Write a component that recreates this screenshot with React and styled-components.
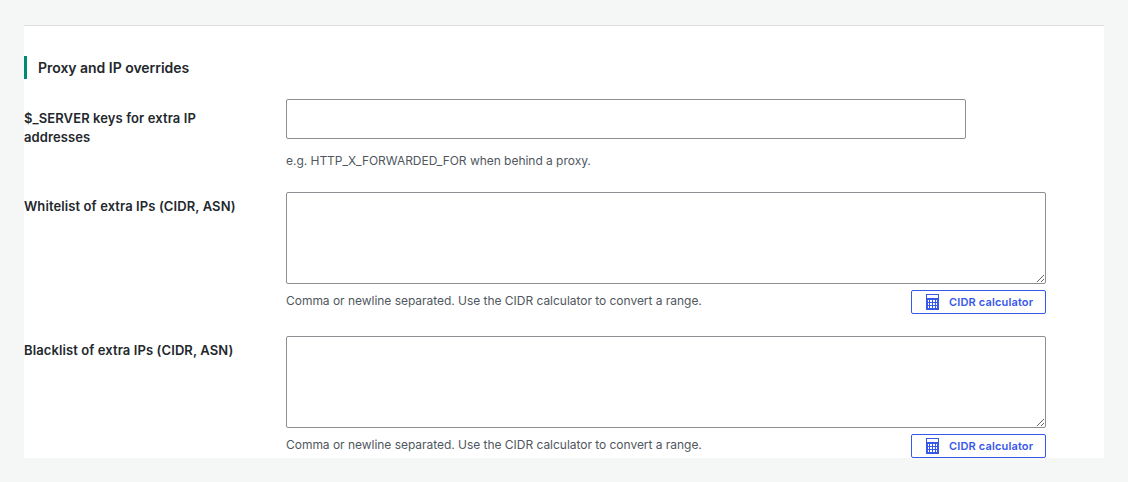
import React from 'react'
import styled, { createGlobalStyle } from 'styled-components'

const GlobalStyle = createGlobalStyle`
    html, body {
        margin: 0;
        padding: 0;
        height: 482px;
        overflow: hidden;
        background: #f5f7f6;
        font-family: Inter, "Noto Sans", sans-serif;
        -webkit-font-smoothing: antialiased;
    }
`

const Page = styled.div`
    padding: 25px 24px 0;
`

const Panel = styled.section`
    height: 433px;
    box-sizing: border-box;
    overflow: hidden;
    background: #fff;
    border-top: 1px solid #dce0df;
`

const SectionTitle = styled.h2`
    display: flex;
    align-items: center;
    height: 23px;
    margin: 30px 0 20px;
    padding-left: 11px;
    border-left: 3px solid #008a74;
    font-size: 14px;
    font-weight: 600;
    letter-spacing: -0.03px;
    color: #23282d;
`

const Row = styled.div`
    display: grid;
    grid-template-columns: 262px 760px;
    margin-bottom: ${(p) => p.$gap}px;
`

const Label = styled.label`
    padding-top: ${(p) => p.$top}px;
    width: 225px;
    font-size: 13px;
    font-weight: 600;
    letter-spacing: 0.1px;
    line-height: 18.5px;
    color: #23282d;
`

const TextInput = styled.input`
    display: block;
    box-sizing: border-box;
    width: 680px;
    height: 40px;
    padding: 0 8px;
    background: #fff;
    border: 1px solid #8c8f94;
    border-radius: 2px;
`

const TextArea = styled.textarea`
    display: block;
    box-sizing: border-box;
    width: 760px;
    height: 92px;
    padding: 8px;
    background: #fff;
    border: 1px solid #8c8f94;
    border-radius: 2px;
`

const Hint = styled.p`
    margin: ${(p) => p.$top}px 0 0;
    font-size: 12px;
    letter-spacing: -0.03px;
    line-height: 16px;
    color: #50575e;
`

const HelpRow = styled.div`
    display: flex;
    justify-content: space-between;
    align-items: flex-start;
    margin-top: 6px;
`

const CalcButton = styled.button`
    display: flex;
    align-items: center;
    box-sizing: border-box;
    width: 135px;
    height: 24px;
    padding: 0 0 0 14px;
    gap: 10px;
    background: #fff;
    border: 1px solid #3858e9;
    border-radius: 2px;
    font-family: inherit;
    font-size: 11px;
    font-weight: 600;
    letter-spacing: 0.15px;
    color: #3858e9;
`

function CalculatorIcon() {
    return (
        <svg width="13" height="16" viewBox="0 0 13 16" fill="none" stroke="currentColor" strokeWidth="1">
            <rect x="0.5" y="0.5" width="12" height="15" />
            <path d="M0.5 4.5H12.5" />
            <path fill="currentColor" stroke="none" d="M1 5h11v10H1zM4 6v2h2V6zM7 6v2h2V6zM4 9v2h2V9zM7 9v2h2V9zM4 12v2h2v-2zM7 12v2h2v-2zM2 6v2h1V6zM2 9v2h1V9zM2 12v2h1v-2zM10 6v2h1V6zM10 9v2h1V9zM10 12v2h1v-2z" fillRule="evenodd" />
        </svg>
    )
}

function CidrField({ label, gap }) {
    return (
        <Row $gap={gap}>
            <Label $top={5}>{label}</Label>
            <div>
                <TextArea />
                <HelpRow>
                    <Hint $top={3}>Comma or newline separated. Use the CIDR calculator to convert a range.</Hint>
                    <CalcButton type="button">
                        <CalculatorIcon />
                        CIDR calculator
                    </CalcButton>
                </HelpRow>
            </div>
        </Row>
    )
}

export default function App() {
    return (
        <>
            <GlobalStyle />
            <Page>
                <Panel>
                    <SectionTitle>Proxy and IP overrides</SectionTitle>
                    <Row $gap={23}>
                        <Label $top={10}>$_SERVER keys for extra IP addresses</Label>
                        <div>
                            <TextInput />
                            <Hint $top={14}>e.g. HTTP_X_FORWARDED_FOR when behind a proxy.</Hint>
                        </div>
                    </Row>
                    <CidrField label="Whitelist of extra IPs (CIDR, ASN)" gap={22} />
                    <CidrField label="Blacklist of extra IPs (CIDR, ASN)" gap={0} />
                </Panel>
            </Page>
        </>
    )
}
